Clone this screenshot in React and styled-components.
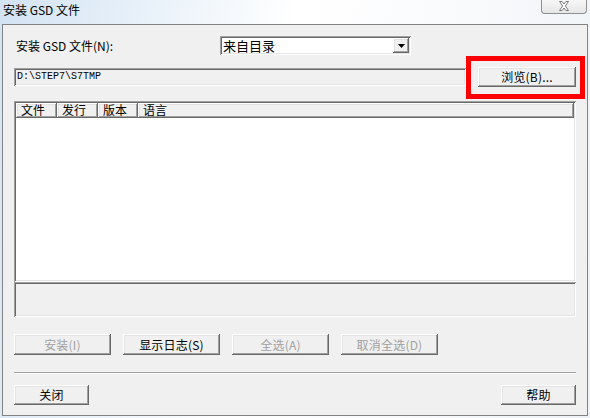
import React from "react";
import styled, { createGlobalStyle, css } from "styled-components";

const Global = createGlobalStyle`
  html, body { margin: 0; padding: 0; }
  body { width: 590px; height: 418px; overflow: hidden; background: #fff; }
  * { box-sizing: border-box; }
`;

const CJK = `"Noto Sans CJK SC", "Liberation Sans", sans-serif`;

const raised = css`
  background: #f0f0f0;
  box-shadow: inset -1px -1px 0 #696969, inset 1px 1px 0 #ffffff,
    inset -2px -2px 0 #a0a0a0, inset 2px 2px 0 #e3e3e3;
`;

const sunken = css`
  box-shadow: inset 1px 1px 0 #a0a0a0, inset -1px -1px 0 #ffffff,
    inset 2px 2px 0 #696969, inset -2px -2px 0 #e3e3e3;
`;

const Window = styled.div`
  width: 590px;
  height: 418px;
  display: flex;
  flex-direction: column;
  font-family: ${CJK};
  font-size: 12px;
  color: #000;
  background: linear-gradient(100deg, #d3e3f3 0%, #e8f1f9 22%, #ffffff 45%, #f7f9fb 75%, #eef2f6 100%);
`;

const TitleBar = styled.div`
  height: 24px;
  flex: none;
  display: flex;
  align-items: flex-start;
  justify-content: space-between;
  padding: 0 3px 0 3px;
`;

const Title = styled.div`
  font-size: 12px;
  line-height: 14px;
  margin-top: 3px;
  color: #000;
`;

const CloseBtn = styled.div`
  width: 46px;
  height: 15px;
  margin-top: -1px;
  border: 1px solid #8e8f8f;
  border-top: none;
  border-radius: 0 0 4px 4px;
  background: linear-gradient(#f8f8f8, #e6e6e6);
  display: flex;
  align-items: center;
  justify-content: center;
`;

const Client = styled.div`
  flex: 1;
  margin: 0 2px 2px 2px;
  border: 1px solid #838383;
  background: #f0f0f0;
  padding: 0 11px;
  display: flex;
  flex-direction: column;
`;

const TopRow = styled.div`
  margin-top: 11px;
  height: 19px;
  display: flex;
  align-items: center;
`;

const Label = styled.div`
  width: 206px;
  flex: none;
  line-height: 14px;
  padding-left: 2px;
`;

const Combo = styled.div`
  width: 191px;
  height: 19px;
  background: #fff;
  ${sunken};
  display: flex;
  align-items: center;
  justify-content: space-between;
  padding: 2px;
`;

const ComboText = styled.span`
  font-size: 13px;
  line-height: 15px;
  padding-left: 1px;
`;

const ComboArrow = styled.div`
  width: 16px;
  height: 15px;
  ${raised};
  display: flex;
  align-items: center;
  justify-content: center;
`;

const PathRow = styled.div`
  margin-top: 12px;
  height: 20px;
  display: flex;
  align-items: flex-start;
  position: relative;
`;

const PathField = styled.div`
  width: 453px;
  height: 18px;
  margin-top: 1px;
  ${sunken};
  font-family: "Liberation Mono", monospace;
  font-size: 10px;
  line-height: 18px;
  padding-left: 3px;
`;

const Button = styled.div`
  width: ${(p) => p.$w}px;
  height: ${(p) => p.$h || 21}px;
  flex: none;
  ${raised};
  display: flex;
  align-items: center;
  justify-content: center;
  font-size: 12px;
  line-height: 14px;
  color: ${(p) => (p.$disabled ? "#a0a0a0" : "#000")};
  letter-spacing: 0.2px;
`;

const BrowseWrap = styled.div`
  margin-left: 12px;
  position: relative;
`;

const Highlight = styled.div`
  position: absolute;
  left: -12px;
  top: -11px;
  width: 119px;
  height: 43px;
  border: 5px solid #ff0000;
  pointer-events: none;
`;

const List = styled.div`
  margin-top: 14px;
  height: 181px;
  background: #fff;
  ${sunken};
  padding: 2px;
`;

const Header = styled.div`
  display: flex;
  height: 15px;
`;

const HeaderCell = styled.div`
  width: ${(p) => p.$w}px;
  flex: ${(p) => (p.$grow ? 1 : "none")};
  height: 15px;
  ${raised};
  line-height: 14px;
  padding-left: 5px;
  font-size: 12px;
`;

const Status = styled.div`
  height: 35px;
  ${sunken};
`;

const ButtonRow = styled.div`
  margin-top: 17px;
  display: flex;
  gap: 12px;
`;

const Separator = styled.div`
  margin-top: 17px;
  height: 2px;
  border-top: 1px solid #a0a0a0;
  border-bottom: 1px solid #ffffff;
`;

const BottomRow = styled.div`
  margin-top: 11px;
  display: flex;
  justify-content: space-between;
`;

export default function App() {
  return (
    <>
      <Global />
      <Window>
        <TitleBar>
          <Title>安装 GSD 文件</Title>
          <CloseBtn>
            <svg width="12" height="10" viewBox="0 0 12 10">
              <path
                d="M1.5 0.5 L4 0.5 L6 3 L8 0.5 L10.5 0.5 L7.4 5 L10.5 9.5 L8 9.5 L6 7 L4 9.5 L1.5 9.5 L4.6 5 Z"
                fill="#ffffff"
                stroke="#7a7a7a"
                strokeWidth="1"
                strokeLinejoin="round"
              />
            </svg>
          </CloseBtn>
        </TitleBar>
        <Client>
          <TopRow>
            <Label>安装 GSD 文件(N):</Label>
            <Combo>
              <ComboText>来自目录</ComboText>
              <ComboArrow>
                <svg width="7" height="4" viewBox="0 0 7 4">
                  <path d="M0 0 H7 L3.5 4 Z" fill="#000" />
                </svg>
              </ComboArrow>
            </Combo>
          </TopRow>
          <PathRow>
            <PathField>D:\STEP7\S7TMP</PathField>
            <BrowseWrap>
              <Button $w={98} $h={20}>浏览(B)...</Button>
              <Highlight />
            </BrowseWrap>
          </PathRow>
          <List>
            <Header>
              <HeaderCell $w={41}>文件</HeaderCell>
              <HeaderCell $w={41}>发行</HeaderCell>
              <HeaderCell $w={40}>版本</HeaderCell>
              <HeaderCell $grow>语言</HeaderCell>
            </Header>
          </List>
          <Status />
          <ButtonRow>
            <Button $w={97} $disabled>安装(I)</Button>
            <Button $w={97}>显示日志(S)</Button>
            <Button $w={97} $disabled>全选(A)</Button>
            <Button $w={97} $disabled>取消全选(D)</Button>
          </ButtonRow>
          <Separator />
          <BottomRow>
            <Button $w={75} $h={20}>关闭</Button>
            <Button $w={75} $h={20}>帮助</Button>
          </BottomRow>
        </Client>
      </Window>
    </>
  );
}
